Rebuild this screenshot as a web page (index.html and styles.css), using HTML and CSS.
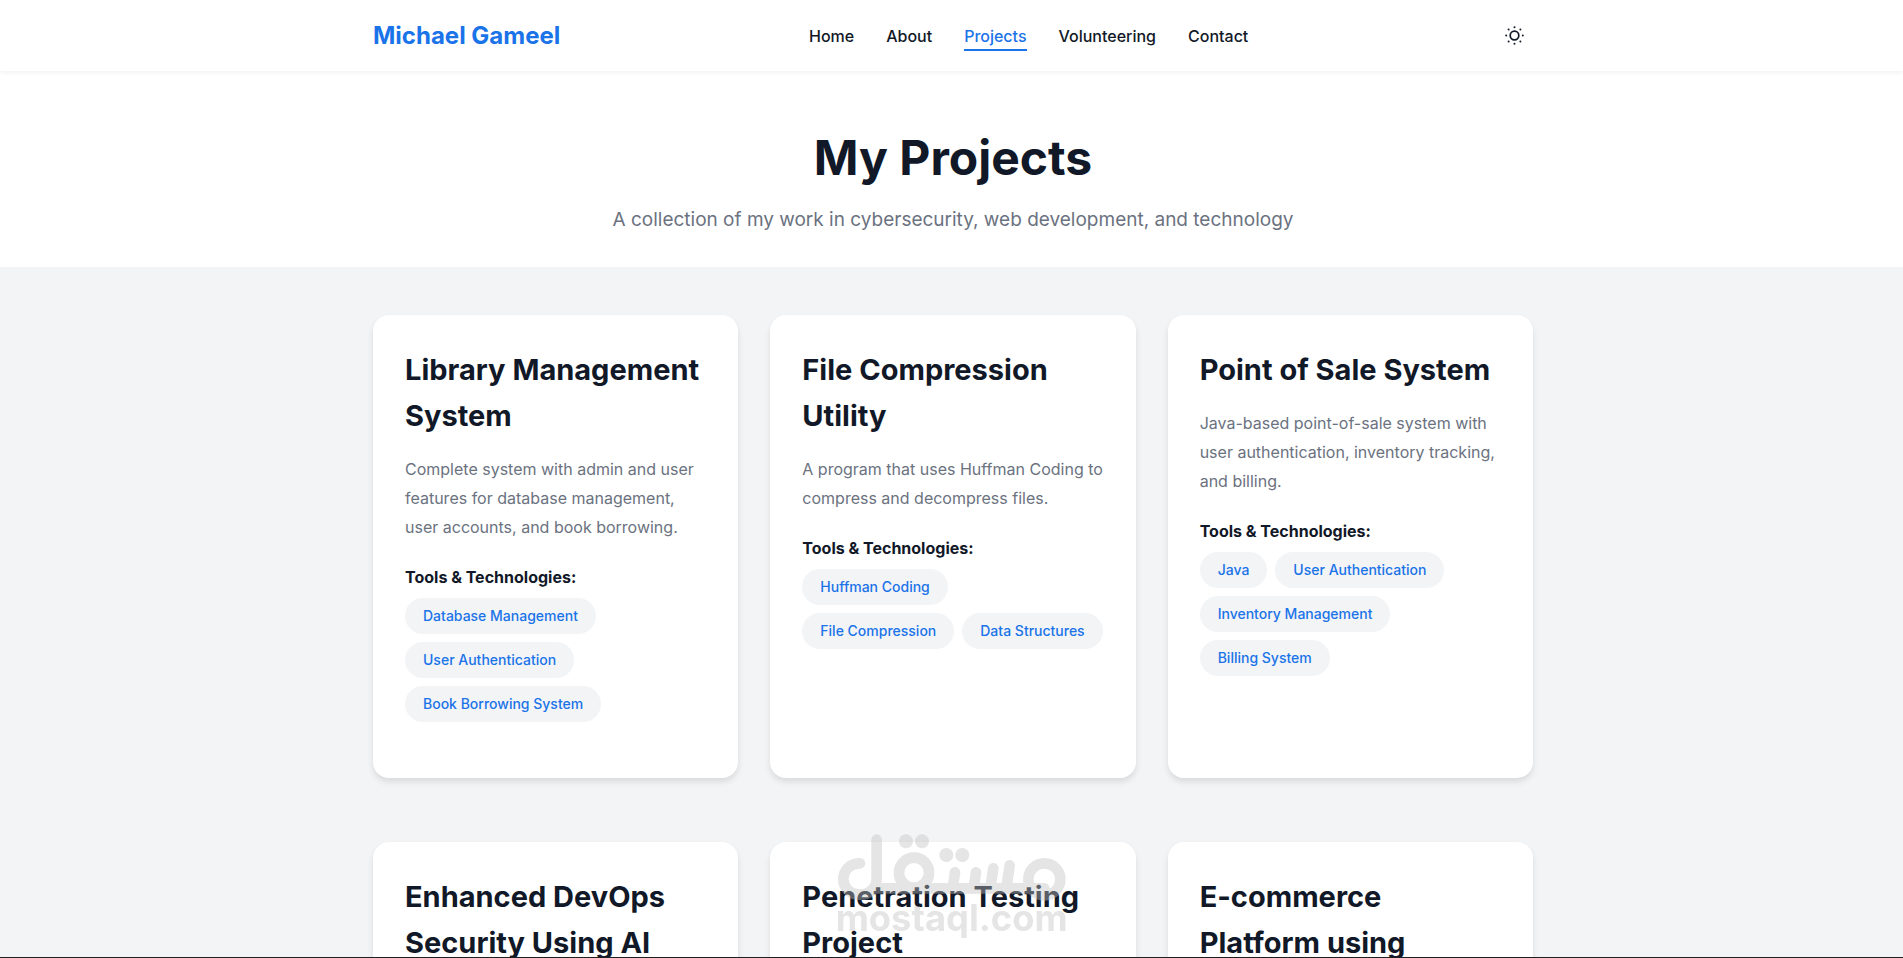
FILE: index.html
```html
<!DOCTYPE html>
<html lang="en">
<head>
<meta charset="utf-8">
<meta name="viewport" content="width=device-width, initial-scale=1">
<title>Projects - Michael Gameel</title>
<link rel="stylesheet" href="styles.css">
</head>
<body>
<header class="header">
  <div class="container header-row">
    <a class="logo" href="#">Michael Gameel</a>
    <nav class="nav">
      <a class="nav-link" href="#">Home</a>
      <a class="nav-link" href="#">About</a>
      <a class="nav-link active" href="#" aria-current="page">Projects</a>
      <a class="nav-link" href="#">Volunteering</a>
      <a class="nav-link" href="#">Contact</a>
    </nav>
    <button class="theme-toggle" type="button" aria-label="Toggle theme">
      <svg width="20" height="20" viewBox="0 0 20 20" fill="none" aria-hidden="true">
        <circle cx="9.5" cy="9.5" r="4.3" stroke="currentColor" stroke-width="1.7"/>
        <g fill="currentColor">
          <circle cx="9.5" cy="1.2" r="1"/><circle cx="9.5" cy="17.8" r="1"/>
          <circle cx="1.2" cy="9.5" r="1"/><circle cx="17.8" cy="9.5" r="1"/>
          <circle cx="3.6" cy="3.6" r="1"/><circle cx="15.4" cy="3.6" r="1"/>
          <circle cx="3.6" cy="15.4" r="1"/><circle cx="15.4" cy="15.4" r="1"/>
        </g>
      </svg>
    </button>
  </div>
</header>
<main>
  <section class="hero">
    <div class="container">
      <h1 class="hero-title">My Projects</h1>
      <p class="hero-text">A collection of my work in cybersecurity, web development, and technology</p>
    </div>
  </section>
  <section class="projects">
    <div class="container grid">
      <article class="card">
        <h2 class="card-title">Library Management System</h2>
        <p class="card-text">Complete system with admin and user features for database management, user accounts, and book borrowing.</p>
        <h3 class="tools-title">Tools &amp; Technologies:</h3>
        <ul class="tags">
          <li class="tag">Database Management</li>
          <li class="tag">User Authentication</li>
          <li class="tag">Book Borrowing System</li>
        </ul>
      </article>
      <article class="card">
        <h2 class="card-title">File Compression Utility</h2>
        <p class="card-text">A program that uses Huffman Coding to compress and decompress files.</p>
        <h3 class="tools-title">Tools &amp; Technologies:</h3>
        <ul class="tags">
          <li class="tag">Huffman Coding</li>
          <li class="tag">File Compression</li>
          <li class="tag">Data Structures</li>
        </ul>
      </article>
      <article class="card">
        <h2 class="card-title">Point of Sale System</h2>
        <p class="card-text">Java-based point-of-sale system with user authentication, inventory tracking, and billing.</p>
        <h3 class="tools-title">Tools &amp; Technologies:</h3>
        <ul class="tags">
          <li class="tag">Java</li>
          <li class="tag">User Authentication</li>
          <li class="tag">Inventory Management</li>
          <li class="tag">Billing System</li>
        </ul>
      </article>
      <article class="card">
        <h2 class="card-title">Enhanced DevOps Security Using AI</h2>
      </article>
      <article class="card">
        <h2 class="card-title">Penetration Testing Project</h2>
      </article>
      <article class="card">
        <h2 class="card-title">E-commerce Platform using</h2>
      </article>
    </div>
  </section>
</main>
<div class="watermark">
  <svg class="watermark-art" width="230" height="108" viewBox="228 69 690 324" role="img" aria-label="مستقل mostaql.com">
    <g fill="none" stroke="#c0c0c0" stroke-width="32" stroke-linecap="round">
      <path d="M347 89V205C347 235 325 254 297 254C268 254 247 234 247 208C247 180 268 160 297 160"/>
      <path d="M347 235H850"/>
      <circle cx="459" cy="188" r="45"/>
      <path d="M582 187L575 235M645 187L638 235M697 175L688 235M746 166L736 235"/>
      <circle cx="850" cy="208" r="48"/>
    </g>
    <g fill="#c0c0c0">
      <circle cx="435" cy="94" r="21"/><circle cx="483" cy="94" r="21"/>
      <circle cx="556" cy="135" r="21"/><circle cx="604" cy="135" r="21"/>
      <text class="watermark-text" x="572" y="362" text-anchor="middle">mostaql.com</text>
    </g>
  </svg>
</div>
<div class="screen-edge"></div>
</body>
</html>
```
FILE: styles.css
```css
* {
  box-sizing: border-box;
  margin: 0;
  padding: 0;
}

body {
  height: 100vh;
  overflow: hidden;
  background: #f3f4f6;
  color: #111827;
  font-family: Inter, "Liberation Sans", sans-serif;
  font-size: 16px;
  line-height: 26px;
}

.container {
  max-width: 1203px;
  margin: 0 auto;
  padding: 0 20px 0 23px;
}

.header {
  position: relative;
  z-index: 1;
  padding: 16px 0;
  background: #fff;
  box-shadow: 0 2px 4px rgba(0, 0, 0, 0.05);
}

.header-row {
  display: flex;
  align-items: center;
  justify-content: space-between;
}

.logo {
  color: #1a73e8;
  font-size: 24px;
  font-weight: 700;
  line-height: 39px;
  text-decoration: none;
}

.nav {
  display: flex;
  gap: 32px;
}

.nav-link {
  position: relative;
  color: #111827;
  font-weight: 500;
  text-decoration: none;
}

.nav-link.active {
  color: #1a73e8;
}

.nav-link.active::after {
  content: "";
  position: absolute;
  right: 0;
  bottom: -2px;
  left: 0;
  height: 2px;
  background: #1a73e8;
}

.theme-toggle {
  display: flex;
  padding: 8px;
  border: 0;
  background: none;
  color: #111827;
  cursor: pointer;
}

.hero {
  padding: 48px 0 32px;
  background: #fff;
  text-align: center;
}

.hero-title {
  margin-bottom: 8px;
  font-size: 48px;
  font-weight: 700;
  line-height: 77px;
}

.hero-text {
  color: #6b7280;
  font-size: 19px;
  line-height: 31px;
}

.projects {
  padding: 48px 0;
}

.grid {
  display: grid;
  grid-template-columns: repeat(3, 1fr);
  gap: 64px 32px;
}

.card {
  padding: 32px;
  border-radius: 16px;
  background: #fff;
  box-shadow: 0 4px 6px rgba(0, 0, 0, 0.1);
}

.card-title {
  margin-bottom: 16px;
  font-size: 29px;
  font-weight: 700;
  line-height: 46px;
}

.card-text {
  margin-bottom: 23px;
  color: #6b7280;
  line-height: 29px;
}

.tools-title {
  margin-bottom: 8px;
  font-size: 16px;
  font-weight: 700;
  line-height: 25px;
}

.tags {
  display: flex;
  flex-wrap: wrap;
  gap: 8px;
  margin-bottom: 24px;
  list-style: none;
}

.tag {
  padding: 6px 18px;
  border-radius: 20px;
  background: #f3f4f6;
  color: #1a73e8;
  font-size: 14px;
  font-weight: 500;
  line-height: 24px;
}

.watermark {
  position: fixed;
  right: 0;
  bottom: 17px;
  left: 0;
  z-index: 2;
  display: flex;
  justify-content: center;
  pointer-events: none;
}

.watermark-art {
  opacity: 0.42;
}

.watermark-text {
  font-size: 109px;
  font-weight: 700;
}

.screen-edge {
  position: fixed;
  right: 0;
  bottom: 0;
  left: 0;
  z-index: 3;
  height: 1px;
  background: #1f1f1f;
}
```
